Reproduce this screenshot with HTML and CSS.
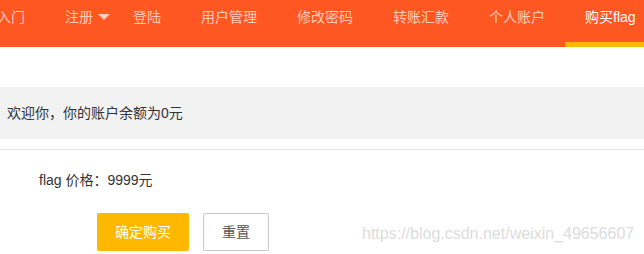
FILE: index.html
```html
<!DOCTYPE html>
<html lang="zh">
<head>
<meta charset="utf-8">
<title>购买flag</title>
<link rel="stylesheet" href="styles.css">
</head>
<body>
<ul class="nav">
  <li class="nav-item">入门</li>
  <li class="nav-item">注册<span class="nav-more"></span></li>
  <li class="nav-item">登陆</li>
  <li class="nav-item">用户管理</li>
  <li class="nav-item">修改密码</li>
  <li class="nav-item">转账汇款</li>
  <li class="nav-item">个人账户</li>
  <li class="nav-item nav-this">购买flag</li>
</ul>
<div class="quote">欢迎你，你的账户余额为0元</div>
<hr class="line">
<div class="price-row">flag 价格：9999元</div>
<div class="btn-row">
  <button class="btn btn-warm">确定购买</button>
  <button class="btn btn-primary">重置</button>
</div>
<div class="watermark">https://blog.csdn.net/weixin_49656607</div>
</body>
</html>
```
FILE: styles.css
```css
html, body {
  margin: 0;
  padding: 0;
  width: 644px;
  height: 254px;
  overflow: hidden;
  background: #fff;
}
body {
  position: relative;
  font-family: "Liberation Sans", "Noto Sans CJK SC", sans-serif;
  font-size: 14px;
  color: #333;
}
.nav {
  list-style: none;
  margin: -13px 0 0 -23px;
  padding: 0;
  height: 60px;
  background: #FF5722;
  display: flex;
  white-space: nowrap;
}
.nav-item {
  position: relative;
  padding: 0 20px;
  line-height: 60px;
  color: rgba(255,255,255,.7);
  flex: none;
}
.nav-more {
  position: absolute;
  top: 27px;
  right: 3px;
  width: 0;
  height: 0;
  border-style: solid;
  border-width: 6px 6px 0 6px;
  border-color: rgba(255,255,255,.7) transparent transparent transparent;
}
.nav-this {
  color: #fff;
}
.nav-this::after {
  content: "";
  position: absolute;
  left: 0;
  right: 0;
  bottom: 0;
  height: 5px;
  background: #FFB800;
}
.quote {
  margin-top: 40px;
  padding: 15px 15px 15px 7px;
  line-height: 22px;
  background: #f2f2f2;
  color: #333;
}
.line {
  margin: 10px 0 0 0;
  height: 1px;
  border: 0;
  background: #e6e6e6;
}
.price-row {
  margin-top: 11px;
  padding-left: 39px;
  line-height: 38px;
  height: 38px;
}
.btn-row {
  margin-top: 14px;
  padding-left: 97px;
  display: flex;
  gap: 14px;
}
.btn {
  height: 38px;
  line-height: 36px;
  padding: 0;
  text-align: center;
  white-space: nowrap;
  font-family: inherit;
  font-size: 14px;
  border-radius: 2px;
  border: 1px solid transparent;
  cursor: pointer;
}
.btn-warm {
  width: 92px;
  background: #FFB800;
  color: #fff;
  border-color: #FFB800;
}
.btn-primary {
  width: 66px;
  background: #fff;
  color: #555;
  border-color: #C9C9C9;
}
.watermark {
  position: absolute;
  left: 362px;
  top: 225px;
  font-family: "Liberation Sans", sans-serif;
  font-size: 16px;
  color: #dcdcdc;
  white-space: nowrap;
}
```
